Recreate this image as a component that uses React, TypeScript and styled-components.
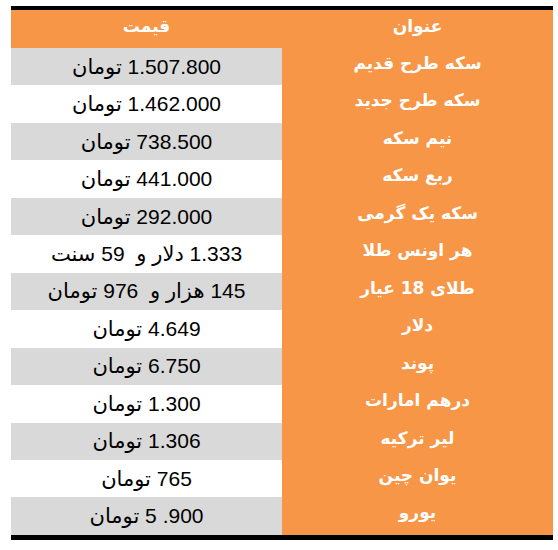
import React from "react";
import styled, { createGlobalStyle } from "styled-components";

interface PriceRow {
  title: string;
  price: string;
}

const rows: PriceRow[] = [
  { title: "سکه طرح قدیم", price: "1.507.800 تومان" },
  { title: "سکه طرح جدید", price: "1.462.000 تومان" },
  { title: "نیم سکه", price: "738.500 تومان" },
  { title: "ربع سکه", price: "441.000 تومان" },
  { title: "سکه یک گرمی", price: "292.000 تومان" },
  { title: "هر اونس طلا", price: "1.333 دلار و  59 سنت" },
  { title: "طلای 18 عیار", price: "145 هزار و  976 تومان" },
  { title: "دلار", price: "4.649 تومان" },
  { title: "پوند", price: "6.750 تومان" },
  { title: "درهم امارات", price: "1.300 تومان" },
  { title: "لیر ترکیه", price: "1.306 تومان" },
  { title: "یوان چین", price: "765 تومان" },
  { title: "یورو", price: "900. 5 تومان" },
];

const GlobalStyle = createGlobalStyle`
  html, body {
    margin: 0;
    padding: 0;
    background: #ffffff;
  }
  body {
    font-family: "Liberation Sans", "DejaVu Sans", sans-serif;
  }
`;

const Table = styled.div`
  direction: rtl;
  width: 542px;
  margin: 6px 0 0 11px;
  display: grid;
  grid-template-columns: 271px 271px;
  grid-template-rows: 38px repeat(13, 37.46px);
  border-top: 4px solid #000000;
  border-bottom: 5px solid #000000;
`;

const HeadCell = styled.div`
  display: flex;
  justify-content: center;
  align-items: flex-start;
  padding-top: 6px;
  box-sizing: border-box;
  background: #f79646;
  color: #ffffff;
  font-family: "DejaVu Sans", sans-serif;
  font-weight: bold;
  font-size: 17px;
  border-bottom: 5px solid #000000;
  height: 43px;
`;

const TitleCell = styled.div`
  display: flex;
  justify-content: center;
  align-items: flex-start;
  padding-top: 5px;
  box-sizing: border-box;
  background: #f79646;
  color: #ffffff;
  font-family: "DejaVu Sans", sans-serif;
  font-weight: bold;
  font-size: 17px;
`;

const PriceCell = styled.div<{ $shaded: boolean }>`
  display: flex;
  justify-content: center;
  align-items: center;
  background: ${(p) => (p.$shaded ? "#d9d9d9" : "#ffffff")};
  color: #000000;
  font-size: 21px;
  white-space: pre;
`;

const App: React.FC = () => {
  return (
    <>
      <GlobalStyle />
      <Table>
        <HeadCell>عنوان</HeadCell>
        <HeadCell>قیمت</HeadCell>
        {rows.map((row, i) => (
          <React.Fragment key={row.title}>
            <TitleCell>{row.title}</TitleCell>
            <PriceCell $shaded={i % 2 === 0}>{row.price}</PriceCell>
          </React.Fragment>
        ))}
      </Table>
    </>
  );
};

export default App;
